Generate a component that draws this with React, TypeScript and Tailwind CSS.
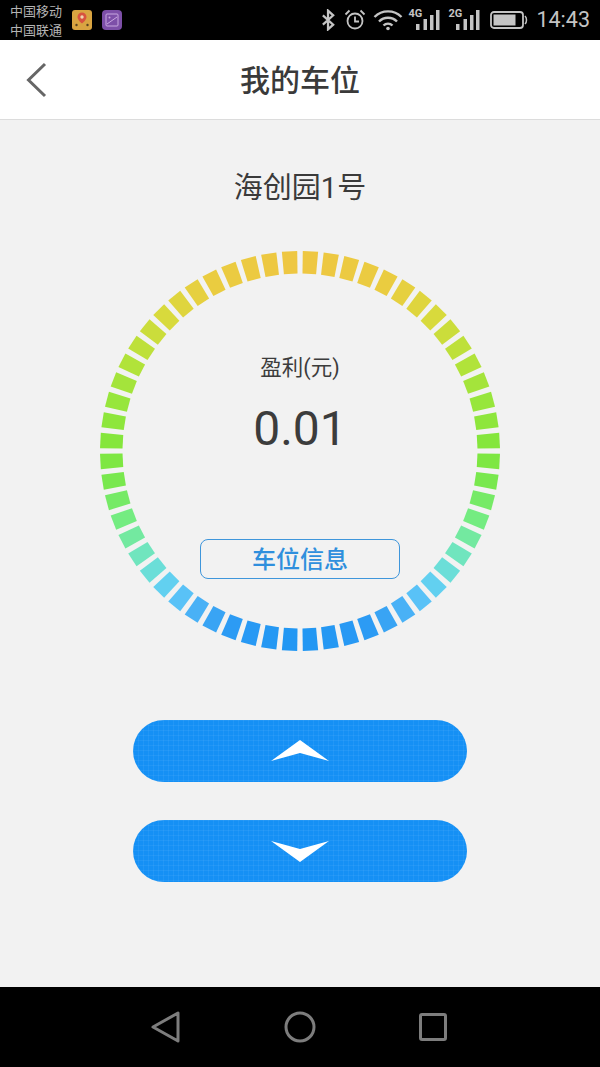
const CJK = "font-['Roboto','Noto_Sans_CJK_SC',sans-serif]";

const stops: [number, number[]][] = [
  [0, [238, 198, 66]],
  [30, [234, 205, 64]],
  [45, [216, 218, 60]],
  [60, [184, 226, 58]],
  [75, [151, 230, 60]],
  [90, [128, 230, 60]],
  [100, [120, 232, 80]],
  [110, [116, 236, 124]],
  [120, [114, 232, 176]],
  [128, [108, 224, 212]],
  [135, [98, 208, 240]],
  [142, [88, 192, 248]],
  [150, [64, 168, 244]],
  [160, [42, 154, 244]],
  [180, [33, 150, 243]],
];

function colorAt(a: number) {
  for (let i = 1; i < stops.length; i++) {
    const [a1, c1] = stops[i];
    const [a0, c0] = stops[i - 1];
    if (a <= a1) {
      const t = (a - a0) / (a1 - a0);
      const c = c0.map((v, k) => Math.round(v + (c1[k] - v) * t));
      return `rgb(${c[0]},${c[1]},${c[2]})`;
    }
  }
  return "rgb(33,150,243)";
}

function Ring() {
  const cx = 200;
  const cy = 200;
  const R = 200;
  const r = 177.5;
  const half = 2.2;
  const pt = (rad: number, deg: number) => {
    const t = (deg * Math.PI) / 180;
    return `${(cx + rad * Math.sin(t)).toFixed(2)},${(cy - rad * Math.cos(t)).toFixed(2)}`;
  };
  const segs = Array.from({ length: 60 }, (_, i) => {
    const a = 3 + i * 6;
    const dist = a > 180 ? 360 - a : a;
    return (
      <polygon
        key={i}
        points={[pt(R, a - half), pt(R, a + half), pt(r, a + half), pt(r, a - half)].join(" ")}
        fill={colorAt(dist)}
      />
    );
  });
  return (
    <svg width="400" height="400" viewBox="0 0 400 400" className="block">
      {segs}
    </svg>
  );
}

function Signal({ label }: { label: string }) {
  return (
    <svg width="32" height="24" viewBox="0 0 32 24">
      <text x="0.5" y="9" fontSize="11" fontWeight="700" fill="#c4c4c4" fontFamily="Roboto, sans-serif">{label}</text>
      <rect x="8" y="16" width="3.500" height="6" fill="#c4c4c4" />
      <rect x="15.500" y="11" width="3.500" height="11" fill="#c4c4c4" />
      <rect x="22" y="7" width="3.500" height="15" fill="#c4c4c4" />
      <rect x="28" y="2" width="3.500" height="20" fill="#c4c4c4" />
    </svg>
  );
}

function StatusBar() {
  return (
    <div className={`h-10 bg-black flex items-center justify-between pl-[10px] pr-[10px] ${CJK}`}>
      <div className="flex items-center">
        <div className="text-[13px] leading-[19px] text-[#b4b4b4] w-[62px] font-['Noto_Sans_CJK_SC',sans-serif]">
          <div>中国移动</div>
          <div>中国联通</div>
        </div>
        <svg width="20" height="20" viewBox="0 0 20 20">
          <rect width="20" height="20" rx="3" fill="#d9a441" />
          <path d="M10 2.500a4.500 4.500 0 0 0-4.500 4.500c0 3 4.500 6.500 4.500 6.500s4.500-3.500 4.500-6.500A4.500 4.500 0 0 0 10 2.500z" fill="#d8523f" />
          <circle cx="10" cy="7" r="1.700" fill="#f0d8b0" />
          <circle cx="4.500" cy="15" r="1.200" fill="#5a4420" />
          <circle cx="15.500" cy="15" r="1.200" fill="#5a4420" />
        </svg>
        <svg width="20" height="20" viewBox="0 0 20 20" className="ml-[10px]">
          <rect width="20" height="20" rx="4" fill="#7d4fa8" />
          <rect x="4" y="4" width="12" height="12" rx="1" fill="none" stroke="#c9a8e0" strokeWidth="1" />
          <path d="M5 14 L15 7" stroke="#c9a8e0" strokeWidth="1" />
          <circle cx="7.500" cy="7.500" r="1" fill="#c9a8e0" />
        </svg>
      </div>
      <div className="flex items-center">
        <svg width="15" height="22" viewBox="0 0 16 22" fill="none" stroke="#c4c4c4" strokeWidth="2.400">
          <path d="M2 6 L13 16 L7.500 21 V1 L13 6 L2 16" />
        </svg>
        <svg width="22" height="22" viewBox="0 0 22 22" fill="none" stroke="#c4c4c4" strokeWidth="1.800" className="ml-[8px]">
          <circle cx="11" cy="12" r="7.500" />
          <path d="M11 7.500 V12.500 H15" />
          <path d="M1.500 5.500 L5.500 1.500 M20.500 5.500 L16.500 1.500" />
        </svg>
        <svg width="30" height="22" viewBox="0 0 30 22" fill="none" stroke="#c4c4c4" strokeWidth="2.400" className="ml-[7px]">
          <path d="M1.500 8 C9 0.500 21 0.500 28.500 8" />
          <path d="M6 12.500 C11 7.500 19 7.500 24 12.500" />
          <path d="M10.500 16.500 C13 14 17 14 19.500 16.500" />
          <circle cx="15" cy="19.500" r="1.800" fill="#c4c4c4" stroke="none" />
        </svg>
        <div className="ml-[5px]"><Signal label="4G" /></div>
        <div className="ml-[8px]"><Signal label="2G" /></div>
        <svg width="38" height="20" viewBox="0 0 38 20" className="ml-[10px]">
          <rect x="1" y="2" width="32" height="16" rx="3" fill="none" stroke="#c4c4c4" strokeWidth="1.800" />
          <rect x="3.500" y="4.500" width="22" height="11" fill="#c4c4c4" />
          <path d="M35 6 C37 8 37 12 35 14" fill="none" stroke="#c4c4c4" strokeWidth="1.500" />
        </svg>
        <span className="ml-[8px] text-[21.500px] leading-none text-[#c4c4c4]">14:43</span>
      </div>
    </div>
  );
}

function Header() {
  return (
    <div className="relative h-20 bg-white border-b border-[#dcdcdc] flex items-center justify-center">
      <svg width="24" height="36" viewBox="0 0 24 36" fill="none" stroke="#666" strokeWidth="3" className="absolute left-[24px] top-[22px]">
        <path d="M21 2 L4.500 18 L21 34" />
      </svg>
      <span className={`text-[30px] leading-[44px] mt-[3px] text-[#3a3a3a] font-medium ${CJK}`}>我的车位</span>
    </div>
  );
}

const GRID =
  "bg-[#1590f5] bg-[linear-gradient(rgba(255,255,255,0.05)_1px,transparent_1px),linear-gradient(90deg,rgba(255,255,255,0.05)_1px,transparent_1px)] bg-[length:5px_5px]";

function ArrowButton({ up }: { up: boolean }) {
  return (
    <div className={`w-[334px] h-[62px] rounded-[31px] flex items-center justify-center ${GRID}`}>
      <svg width="58" height="22" viewBox="0 0 58 22" fill="#fff">
        {up ? <path d="M0 21 L29 0 L58 21 L29 13 Z" /> : <path d="M0 1 L29 9 L58 1 L29 22 Z" />}
      </svg>
    </div>
  );
}

function Content() {
  return (
    <div className="h-[867px] bg-[#f2f2f2] flex flex-col items-center">
      <div className={`mt-[48px] text-[29px] leading-[40px] text-[#3a3a3a] ${CJK}`}>海创园1号</div>
      <div className="relative mt-[43px] w-[400px] h-[400px]">
        <Ring />
        <div className="absolute inset-0 flex flex-col items-center">
          <div className={`mt-[101px] text-[21.500px] leading-[32px] text-[#3c3c3c] ${CJK}`}>盈利(元)</div>
          <div className={`mt-[17px] text-[48px] leading-[56px] text-[#3c3c3c] ${CJK}`}>0.01</div>
          <div className={`mt-[82px] w-[200px] h-[40px] rounded-[8px] border border-[#3f96db] flex items-center justify-center text-[24px] font-medium text-[#2f8fdd] ${CJK}`}>
            <span className="mt-[2px]">车位信息</span>
          </div>
        </div>
      </div>
      <div className="mt-[69px] flex flex-col gap-[38px]">
        <ArrowButton up />
        <ArrowButton up={false} />
      </div>
    </div>
  );
}

function NavBar() {
  return (
    <div className="h-20 bg-black flex items-center justify-center">
      <svg width="30" height="34" viewBox="0 0 30 34" fill="none" stroke="#7d7d7d" strokeWidth="3" strokeLinejoin="round" className="mr-[103px]">
        <path d="M27 3 V31 L2 17 Z" />
      </svg>
      <svg width="32" height="32" viewBox="0 0 32 32" fill="none" stroke="#7d7d7d" strokeWidth="3" className="mr-[103px]">
        <circle cx="16" cy="16" r="14" />
      </svg>
      <svg width="28" height="28" viewBox="0 0 28 28" fill="none" stroke="#7d7d7d" strokeWidth="3" strokeLinejoin="round" className="mr-[2px]">
        <rect x="1.500" y="1.500" width="25" height="25" rx="1.500" />
      </svg>
    </div>
  );
}

export default function App() {
  return (
    <div className="w-[600px] h-[1067px] overflow-hidden">
      <StatusBar />
      <Header />
      <Content />
      <NavBar />
    </div>
  );
}
